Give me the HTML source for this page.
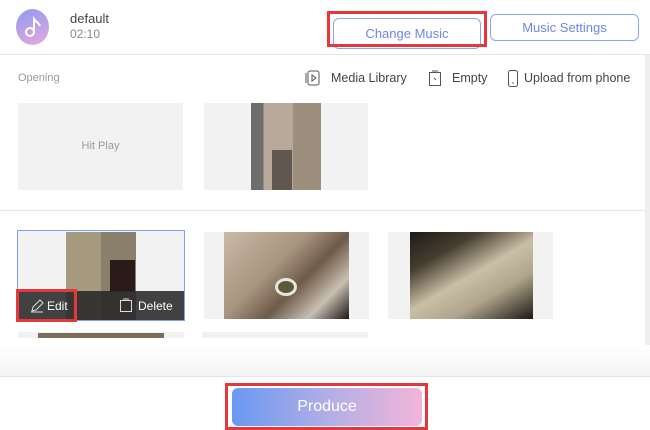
<!DOCTYPE html>
<html><head><meta charset="utf-8"><style>
*{margin:0;padding:0;box-sizing:border-box}
body{width:650px;height:430px;overflow:hidden;background:#fff;font-family:"Liberation Sans",sans-serif;position:relative}
.a{position:absolute}
.btn{position:absolute;border:1px solid #8aa6f0;border-radius:6px;color:#6f86e8;font-size:13px;text-align:center;line-height:28px;background:#fff}
.red{position:absolute;border:3px solid #e5383b}
.card{position:absolute;background:#f2f2f2}
.t{font-size:12.5px;color:#444}
</style></head><body>
<div class="a" style="left:16px;top:9px;width:33px;height:36px;border-radius:50%;background:linear-gradient(160deg,#8f9bf0,#e6a9dd)"></div>
<svg class="a" style="left:22px;top:14px" width="22" height="26" viewBox="0 0 22 26"><circle cx="8" cy="18" r="4" fill="none" stroke="#fff" stroke-width="2"/><path d="M12 18V5c2 3 5 4 6 7" fill="none" stroke="#fff" stroke-width="2"/></svg>
<div class="a" style="left:70px;top:11px;font-size:13px;color:#444">default</div>
<div class="a" style="left:70px;top:27px;font-size:12px;color:#888">02:10</div>
<div class="btn" style="left:333px;top:18px;width:148px;height:31px;line-height:29px">Change Music</div>
<div class="red" style="left:327px;top:11px;width:160px;height:36px"></div>
<div class="btn" style="left:490px;top:14px;width:149px;height:27px;line-height:25px">Music Settings</div>
<div class="a" style="left:0;top:54px;width:650px;height:1px;background:#e8e8e8"></div>
<div class="a" style="left:645px;top:55px;width:5px;height:320px;background:#eee"></div>
<div class="a" style="left:18px;top:72px;font-size:11px;color:#999">Opening</div>
<svg class="a" style="left:305px;top:69px" width="16" height="18"><rect x="3" y="2" width="11" height="14" rx="2" fill="none" stroke="#555"/><path d="M1 4v10" stroke="#555"/><path d="M7 6l4 3-4 3z" fill="none" stroke="#555"/></svg>
<div class="a t" style="left:331px;top:71px">Media Library</div>
<svg class="a" style="left:428px;top:69px" width="14" height="18"><rect x="1.5" y="3.5" width="11" height="13" fill="none" stroke="#555"/><path d="M4 2h6" stroke="#555"/><path d="M6 9l2 2" stroke="#555"/></svg>
<div class="a t" style="left:452px;top:71px">Empty</div>
<svg class="a" style="left:507px;top:69px" width="12" height="20"><rect x="1.5" y="1.5" width="9" height="16" rx="2" fill="none" stroke="#555"/><circle cx="6" cy="14" r="0.8" fill="#555"/></svg>
<div class="a t" style="left:524px;top:71px">Upload from phone</div>
<div class="card" style="left:18px;top:103px;width:165px;height:87px;text-align:center;line-height:87px;font-size:11px;color:#999">Hit Play</div>
<div class="card" style="left:204px;top:103px;width:164px;height:87px"></div>
<div class="a" style="left:251px;top:103px;width:70px;height:87px;background:linear-gradient(90deg,#6b6e6a 0 18%,#b9a99a 18% 60%,#9d8f7e 60%)"></div>
<div class="a" style="left:272px;top:150px;width:20px;height:40px;background:#3a3630;opacity:.7"></div>
<div class="a" style="left:0;top:210px;width:645px;height:1px;background:#e8e8e8"></div>
<div class="card" style="left:17px;top:230px;width:168px;height:91px;border:1px solid #7d9ff0"></div>
<div class="a" style="left:66px;top:232px;width:70px;height:88px;background:linear-gradient(90deg,#a59a80 0 50%,#8a7f6a 50%)"></div>
<div class="a" style="left:110px;top:260px;width:25px;height:32px;background:#2a1a18"></div>
<div class="a" style="left:18px;top:291px;width:166px;height:29px;background:rgba(40,40,40,.88)"></div>
<svg class="a" style="left:29px;top:298px" width="16" height="16"><path d="M2 14h12M3 13l1-4 7-7 3 3-7 7z" fill="none" stroke="#ddd"/></svg>
<div class="a" style="left:47px;top:299px;font-size:12px;color:#fff">Edit</div>
<svg class="a" style="left:119px;top:297px" width="14" height="16"><rect x="1.5" y="3.5" width="11" height="11" fill="none" stroke="#ddd"/><path d="M4 2h6" stroke="#ddd"/></svg>
<div class="a" style="left:138px;top:299px;font-size:12px;color:#fff">Delete</div>
<div class="red" style="left:16px;top:289px;width:61px;height:33px"></div>
<div class="card" style="left:204px;top:232px;width:165px;height:87px"></div>
<div class="a" style="left:224px;top:232px;width:125px;height:87px;background:linear-gradient(135deg,#c9b9a6 0%,#a89580 40%,#6e5a48 60%,#c8bfb2 80%,#1c1714 100%)"></div>
<div class="a" style="left:275px;top:278px;width:22px;height:18px;border-radius:50%;background:#5d5a3c;border:3px solid #e8e4df"></div>
<div class="card" style="left:388px;top:232px;width:165px;height:87px"></div>
<div class="a" style="left:410px;top:232px;width:123px;height:87px;background:linear-gradient(150deg,#1e1a16 0%,#463d30 25%,#c9bfa6 50%,#b0a58c 70%,#1c1814 100%)"></div>
<div class="card" style="left:18px;top:332px;width:166px;height:6px"></div>
<div class="a" style="left:38px;top:333px;width:126px;height:5px;background:#7a6d5a"></div>
<div class="card" style="left:202px;top:332px;width:166px;height:6px"></div>
<div class="a" style="left:0;top:345px;width:650px;height:32px;background:linear-gradient(#fff,#f3f3f3)"></div>
<div class="a" style="left:0;top:376px;width:650px;height:1px;background:#e4e4e4"></div>
<div class="a" style="left:232px;top:388px;width:190px;height:38px;border-radius:6px;background:linear-gradient(90deg,#6a98f2,#b1aee6,#f3b5d8);color:#fff;font-size:16px;text-align:center;line-height:38px">Produce</div>
<div class="red" style="left:225px;top:383px;width:203px;height:47px"></div>
</body></html>
